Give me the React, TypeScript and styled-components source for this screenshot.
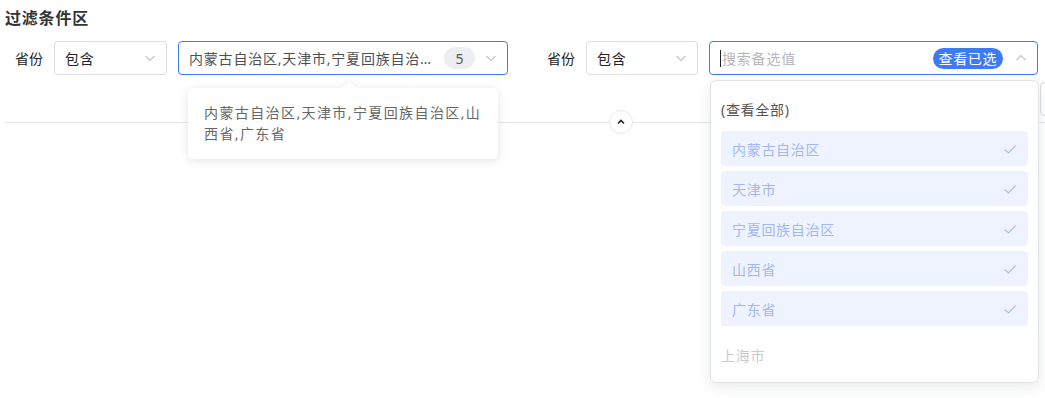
import React from 'react';
import styled, { createGlobalStyle } from 'styled-components';

const GlobalStyle = createGlobalStyle`
  html, body {
    margin: 0;
    padding: 0;
    background: #ffffff;
    overflow: hidden;
  }
  body {
    font-family: "Noto Sans", "Noto Sans CJK SC", sans-serif;
    color: #333333;
  }
`;

const BLUE = '#3d7bf5';

const Page = styled.div`
  width: 1045px;
  height: 398px;
  padding: 6px 0 0 5px;
  box-sizing: border-box;
  position: relative;
  overflow: hidden;
`;

const Title = styled.h3`
  margin: 0;
  font-size: 16px;
  line-height: 24px;
  font-weight: 700;
  letter-spacing: 0.8px;
  color: #333333;
`;

const FilterRow = styled.div`
  display: flex;
  align-items: center;
  gap: 39px;
  margin-top: 11px;
  padding-left: 10px;
`;

const Group = styled.div`
  display: flex;
  align-items: center;
  gap: 11px;
`;

const Label = styled.span`
  font-size: 14px;
  color: #222222;
  white-space: nowrap;
`;

const Select = styled.div<{ $width: number; $active?: boolean }>`
  position: relative;
  width: ${(p) => p.$width}px;
  height: 34px;
  box-sizing: border-box;
  border: 1px solid ${(p) => (p.$active ? BLUE : '#dcdde6')};
  border-radius: 4px;
  display: flex;
  align-items: center;
  padding: 0 10px;
  font-size: 14px;
  letter-spacing: 0.8px;
  background: #ffffff;
`;

const Value = styled.span<{ $muted?: boolean }>`
  flex: 1;
  min-width: 0;
  white-space: nowrap;
  overflow: hidden;
  text-overflow: ellipsis;
  color: ${(p) => (p.$muted ? '#4f4f52' : '#222222')};
`;

const CountBadge = styled.span`
  flex-shrink: 0;
  height: 22px;
  min-width: 31px;
  border-radius: 11px;
  background: #eceef2;
  color: #555555;
  font-size: 14px;
  letter-spacing: 0;
  display: flex;
  align-items: center;
  justify-content: center;
  margin: 0 10px 0 8px;
`;

const Search = styled.div`
  flex: 1;
  display: flex;
  align-items: center;
  color: #b5b7bd;
`;

const Caret = styled.span`
  width: 1px;
  height: 17px;
  background: #222222;
  margin-right: 1px;
`;

const ViewSelectedButton = styled.span`
  flex-shrink: 0;
  height: 21px;
  padding: 0 6px;
  border-radius: 11px;
  background: ${BLUE};
  color: #ffffff;
  font-size: 14px;
  letter-spacing: 0.6px;
  line-height: 21px;
  margin-right: 12px;
`;

const Chevron = ({ up }: { up?: boolean }) => (
  <svg width="12" height="12" viewBox="0 0 12 12" fill="none">
    <path
      d={up ? 'M1.5 8 L6 3.5 L10.5 8' : 'M1.5 4 L6 8.5 L10.5 4'}
      stroke="#c3c5cc"
      strokeWidth="1.1"
    />
  </svg>
);

const Check = () => (
  <svg width="14" height="14" viewBox="0 0 14 14" fill="none">
    <path d="M1.5 7.5 L5.5 11 L12.5 3.5" stroke="#a9bdf5" strokeWidth="1.1" />
  </svg>
);

const Tooltip = styled.div`
  position: absolute;
  top: 46px;
  left: 9px;
  width: 310px;
  box-sizing: border-box;
  padding: 14px 14px 15px 16px;
  background: #ffffff;
  border-radius: 6px;
  box-shadow: 0 2px 10px rgba(40, 45, 70, 0.12);
  font-size: 14px;
  line-height: 21px;
  letter-spacing: 1.4px;
  color: #666666;
  z-index: 3;

  &::before {
    content: '';
    position: absolute;
    top: -5px;
    left: 156px;
    width: 10px;
    height: 10px;
    background: #ffffff;
    transform: rotate(45deg);
    box-shadow: -2px -2px 4px rgba(40, 45, 70, 0.05);
  }
`;

const Dropdown = styled.div`
  position: absolute;
  top: 38px;
  left: 0;
  width: 329px;
  box-sizing: border-box;
  padding: 10px;
  border: 1px solid #e1e2ea;
  border-radius: 6px;
  background: #ffffff;
  box-shadow: 0 4px 14px rgba(40, 45, 70, 0.1);
  z-index: 3;
`;

const Option = styled.div<{ $selected?: boolean; $disabled?: boolean }>`
  height: 35px;
  display: flex;
  align-items: center;
  justify-content: space-between;
  padding: 0 ${(p) => (p.$selected ? '11px' : '1px')} 0 ${(p) => (p.$selected ? '11px' : '0')};
  margin: ${(p) => (p.$disabled ? '11px 0 0' : '0 0 5px')};
  border-radius: 4px;
  font-size: 14px;
  letter-spacing: 0.7px;
  background: ${(p) => (p.$selected ? '#eef3ff' : 'transparent')};
  color: ${(p) => (p.$selected ? '#a3b8f3' : p.$disabled ? '#c9cacf' : '#555555')};
`;

const SecondRow = styled.div`
  height: 34px;
  margin-top: 7px;
  display: flex;
  padding-left: 1035px;
`;

const GhostButton = styled.div`
  width: 60px;
  height: 34px;
  box-sizing: border-box;
  border: 1px solid #dcdde6;
  border-radius: 4px;
  flex-shrink: 0;
`;

const Divider = styled.div`
  position: relative;
  height: 1px;
  background: #e6e7ec;
  margin-top: 6px;
`;

const CollapseToggle = styled.button`
  position: absolute;
  top: -12px;
  left: 604px;
  width: 24px;
  height: 24px;
  padding: 0;
  border-radius: 50%;
  border: 1px solid #e6e7ec;
  background: #ffffff;
  display: flex;
  align-items: center;
  justify-content: center;
  cursor: pointer;
`;

const selected = ['内蒙古自治区', '天津市', '宁夏回族自治区', '山西省', '广东省'];

export default function App() {
  return (
    <>
      <GlobalStyle />
      <Page>
        <Title>过滤条件区</Title>
        <FilterRow>
          <Group>
            <Label>省份</Label>
            <Select $width={113}>
              <Value>包含</Value>
              <Chevron />
            </Select>
            <Select $width={330} $active>
              <Value $muted>{selected.join(',')}</Value>
              <CountBadge>{selected.length}</CountBadge>
              <Chevron />
              <Tooltip>{selected.join(',')}</Tooltip>
            </Select>
          </Group>
          <Group>
            <Label>省份</Label>
            <Select $width={112}>
              <Value>包含</Value>
              <Chevron />
            </Select>
            <Select $width={329} $active>
              <Search>
                <Caret />
                搜索备选值
              </Search>
              <ViewSelectedButton>查看已选</ViewSelectedButton>
              <Chevron up />
              <Dropdown>
                <Option>(查看全部)</Option>
                {selected.map((name) => (
                  <Option key={name} $selected>
                    {name}
                    <Check />
                  </Option>
                ))}
                <Option $disabled>上海市</Option>
              </Dropdown>
            </Select>
          </Group>
        </FilterRow>
        <SecondRow>
          <GhostButton />
        </SecondRow>
        <Divider>
          <CollapseToggle>
            <svg width="10" height="10" viewBox="0 0 10 10" fill="none">
              <path d="M2 6.5 L5 3.5 L8 6.5" stroke="#222222" strokeWidth="1.6" />
            </svg>
          </CollapseToggle>
        </Divider>
      </Page>
    </>
  );
}
